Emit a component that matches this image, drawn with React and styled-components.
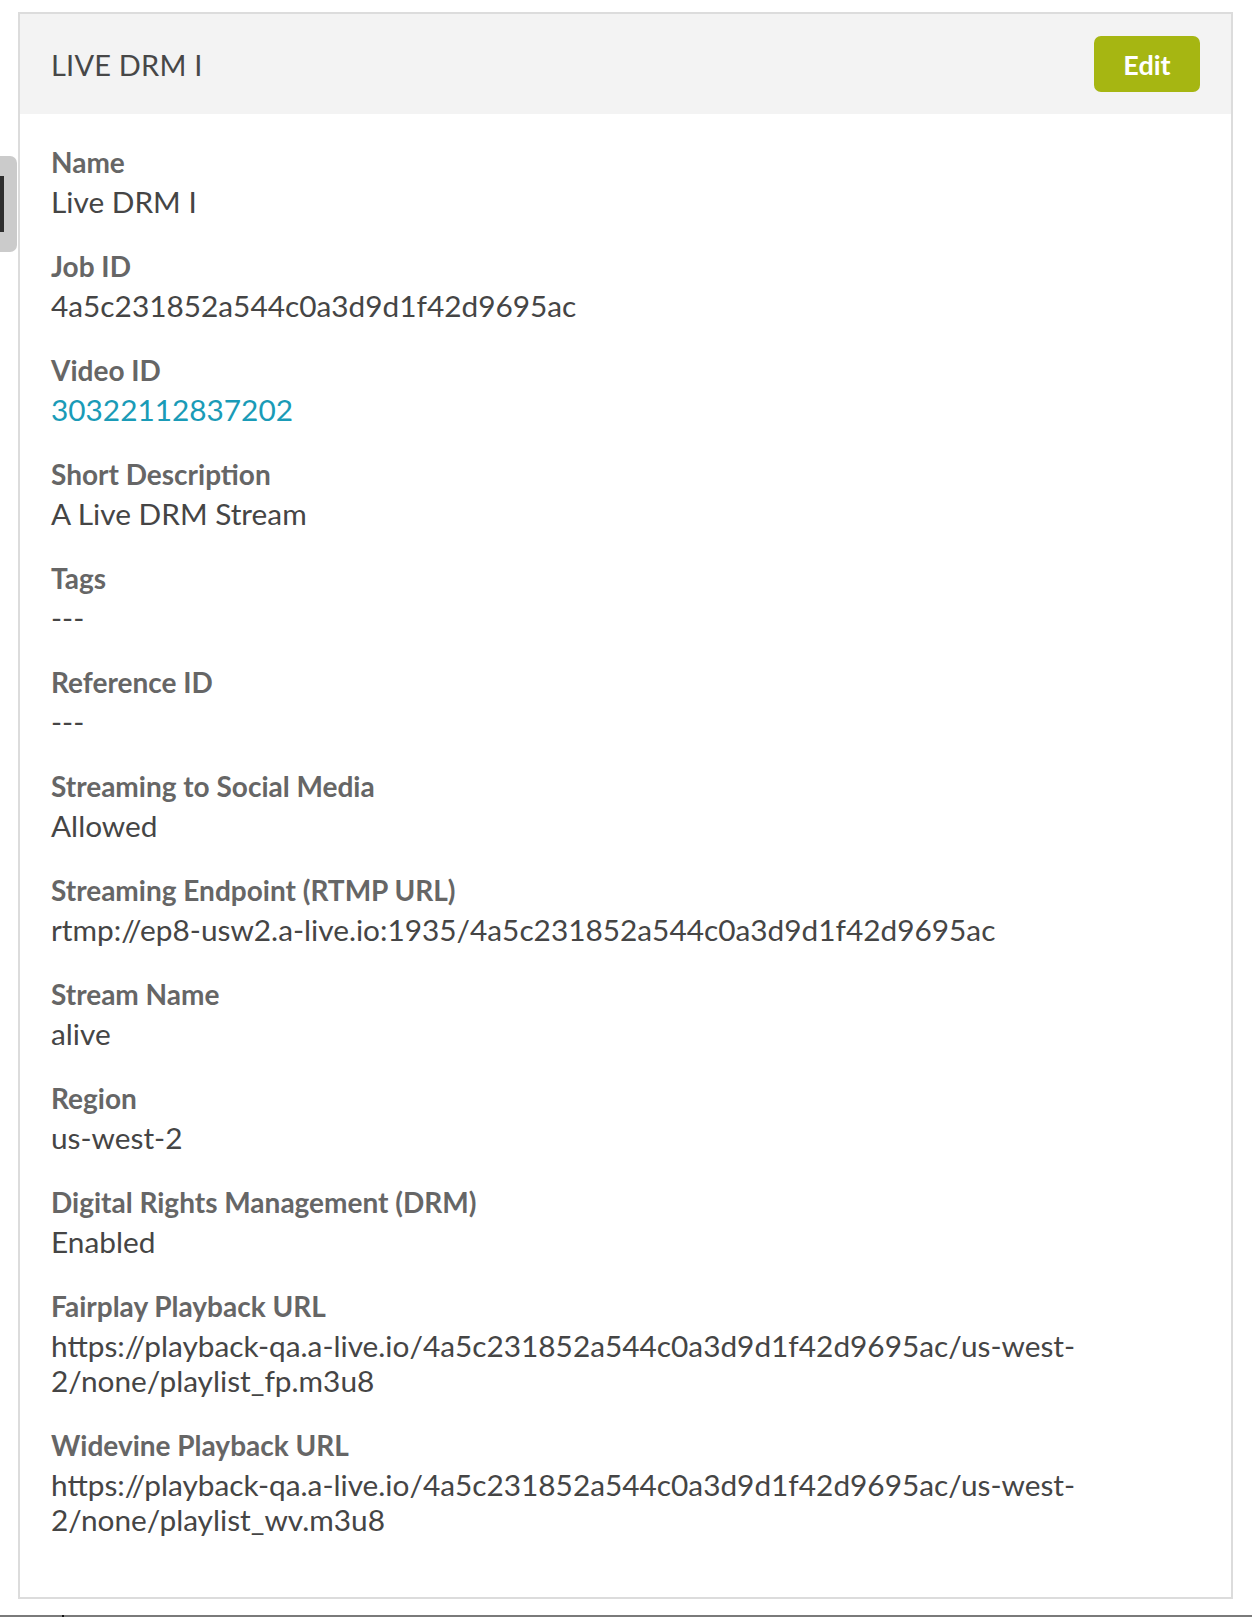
import React from 'react';
import styled, { createGlobalStyle } from 'styled-components';

const GlobalStyle = createGlobalStyle`
  html, body {
    margin: 0;
    padding: 0;
    background: #fff;
  }
  body {
    font-family: Lato, "Open Sans", "Liberation Sans", sans-serif;
    -webkit-font-smoothing: antialiased;
  }
`;

const Page = styled.div`
  width: 1252px;
  padding-top: 12px;
`;

const Row = styled.div`
  display: flex;
  align-items: flex-start;
`;

/* side drawer handle at the left edge */
const Handle = styled.div`
  width: 17px;
  height: 96px;
  margin-top: 144px;
  margin-right: 1px;
  background: #cbcbcb;
  border-radius: 0 7px 7px 0;
  display: flex;
  align-items: center;
`;

const HandleGrip = styled.div`
  width: 4px;
  height: 56px;
  background: #2e2e2e;
`;

const Panel = styled.section`
  width: 1211px;
  border: 2px solid #dcdcdc;
  background: #fff;
`;

const Header = styled.header`
  height: 100px;
  background: #f3f3f3;
  display: flex;
  align-items: center;
  justify-content: space-between;
  padding: 0 31px;
`;

const Title = styled.h2`
  margin: 0;
  font-size: 29px;
  font-weight: 400;
  color: #474747;
  letter-spacing: 0.2px;
`;

const EditButton = styled.button`
  width: 106px;
  height: 56px;
  border: none;
  border-radius: 7px;
  background: #a6b612;
  color: #fff;
  font-family: inherit;
  font-size: 27px;
  font-weight: 700;
  cursor: pointer;
`;

const Body = styled.div`
  padding: 33px 31px 28px;
`;

const Field = styled.div`
  margin-bottom: 32px;
`;

const Label = styled.div`
  font-size: 28px;
  line-height: 31px;
  font-weight: 700;
  color: #666;
  margin-bottom: 6px;
`;

const Value = styled.div`
  font-size: 29.8px;
  line-height: 35px;
  color: ${p => (p.$link ? '#1a9bb7' : '#454545')};
`;

const BottomBar = styled.div`
  margin-top: 16px;
  height: 2px;
  background: #7a7a7a;
  display: flex;
`;

const BarTick = styled.div`
  margin-left: 62px;
  width: 2px;
  background: #111;
`;

const fields = [
  { label: 'Name', value: 'Live DRM I' },
  { label: 'Job ID', value: '4a5c231852a544c0a3d9d1f42d9695ac' },
  { label: 'Video ID', value: '30322112837202', link: true },
  { label: 'Short Description', value: 'A Live DRM Stream' },
  { label: 'Tags', value: '---' },
  { label: 'Reference ID', value: '---' },
  { label: 'Streaming to Social Media', value: 'Allowed' },
  {
    label: 'Streaming Endpoint (RTMP URL)',
    value: 'rtmp://ep8-usw2.a-live.io:1935/4a5c231852a544c0a3d9d1f42d9695ac',
  },
  { label: 'Stream Name', value: 'alive' },
  { label: 'Region', value: 'us-west-2' },
  { label: 'Digital Rights Management (DRM)', value: 'Enabled' },
  {
    label: 'Fairplay Playback URL',
    value:
      'https://playback-qa.a-live.io/4a5c231852a544c0a3d9d1f42d9695ac/us-west-2/none/playlist_fp.m3u8',
  },
  {
    label: 'Widevine Playback URL',
    value:
      'https://playback-qa.a-live.io/4a5c231852a544c0a3d9d1f42d9695ac/us-west-2/none/playlist_wv.m3u8',
  },
];

export default function App() {
  return (
    <Page>
      <GlobalStyle />
      <Row>
        <Handle>
          <HandleGrip />
        </Handle>
        <Panel>
          <Header>
            <Title>LIVE DRM I</Title>
            <EditButton>Edit</EditButton>
          </Header>
          <Body>
            {fields.map(f => (
              <Field key={f.label}>
                <Label>{f.label}</Label>
                <Value $link={f.link}>{f.value}</Value>
              </Field>
            ))}
          </Body>
        </Panel>
      </Row>
      <BottomBar>
        <BarTick />
      </BottomBar>
    </Page>
  );
}
